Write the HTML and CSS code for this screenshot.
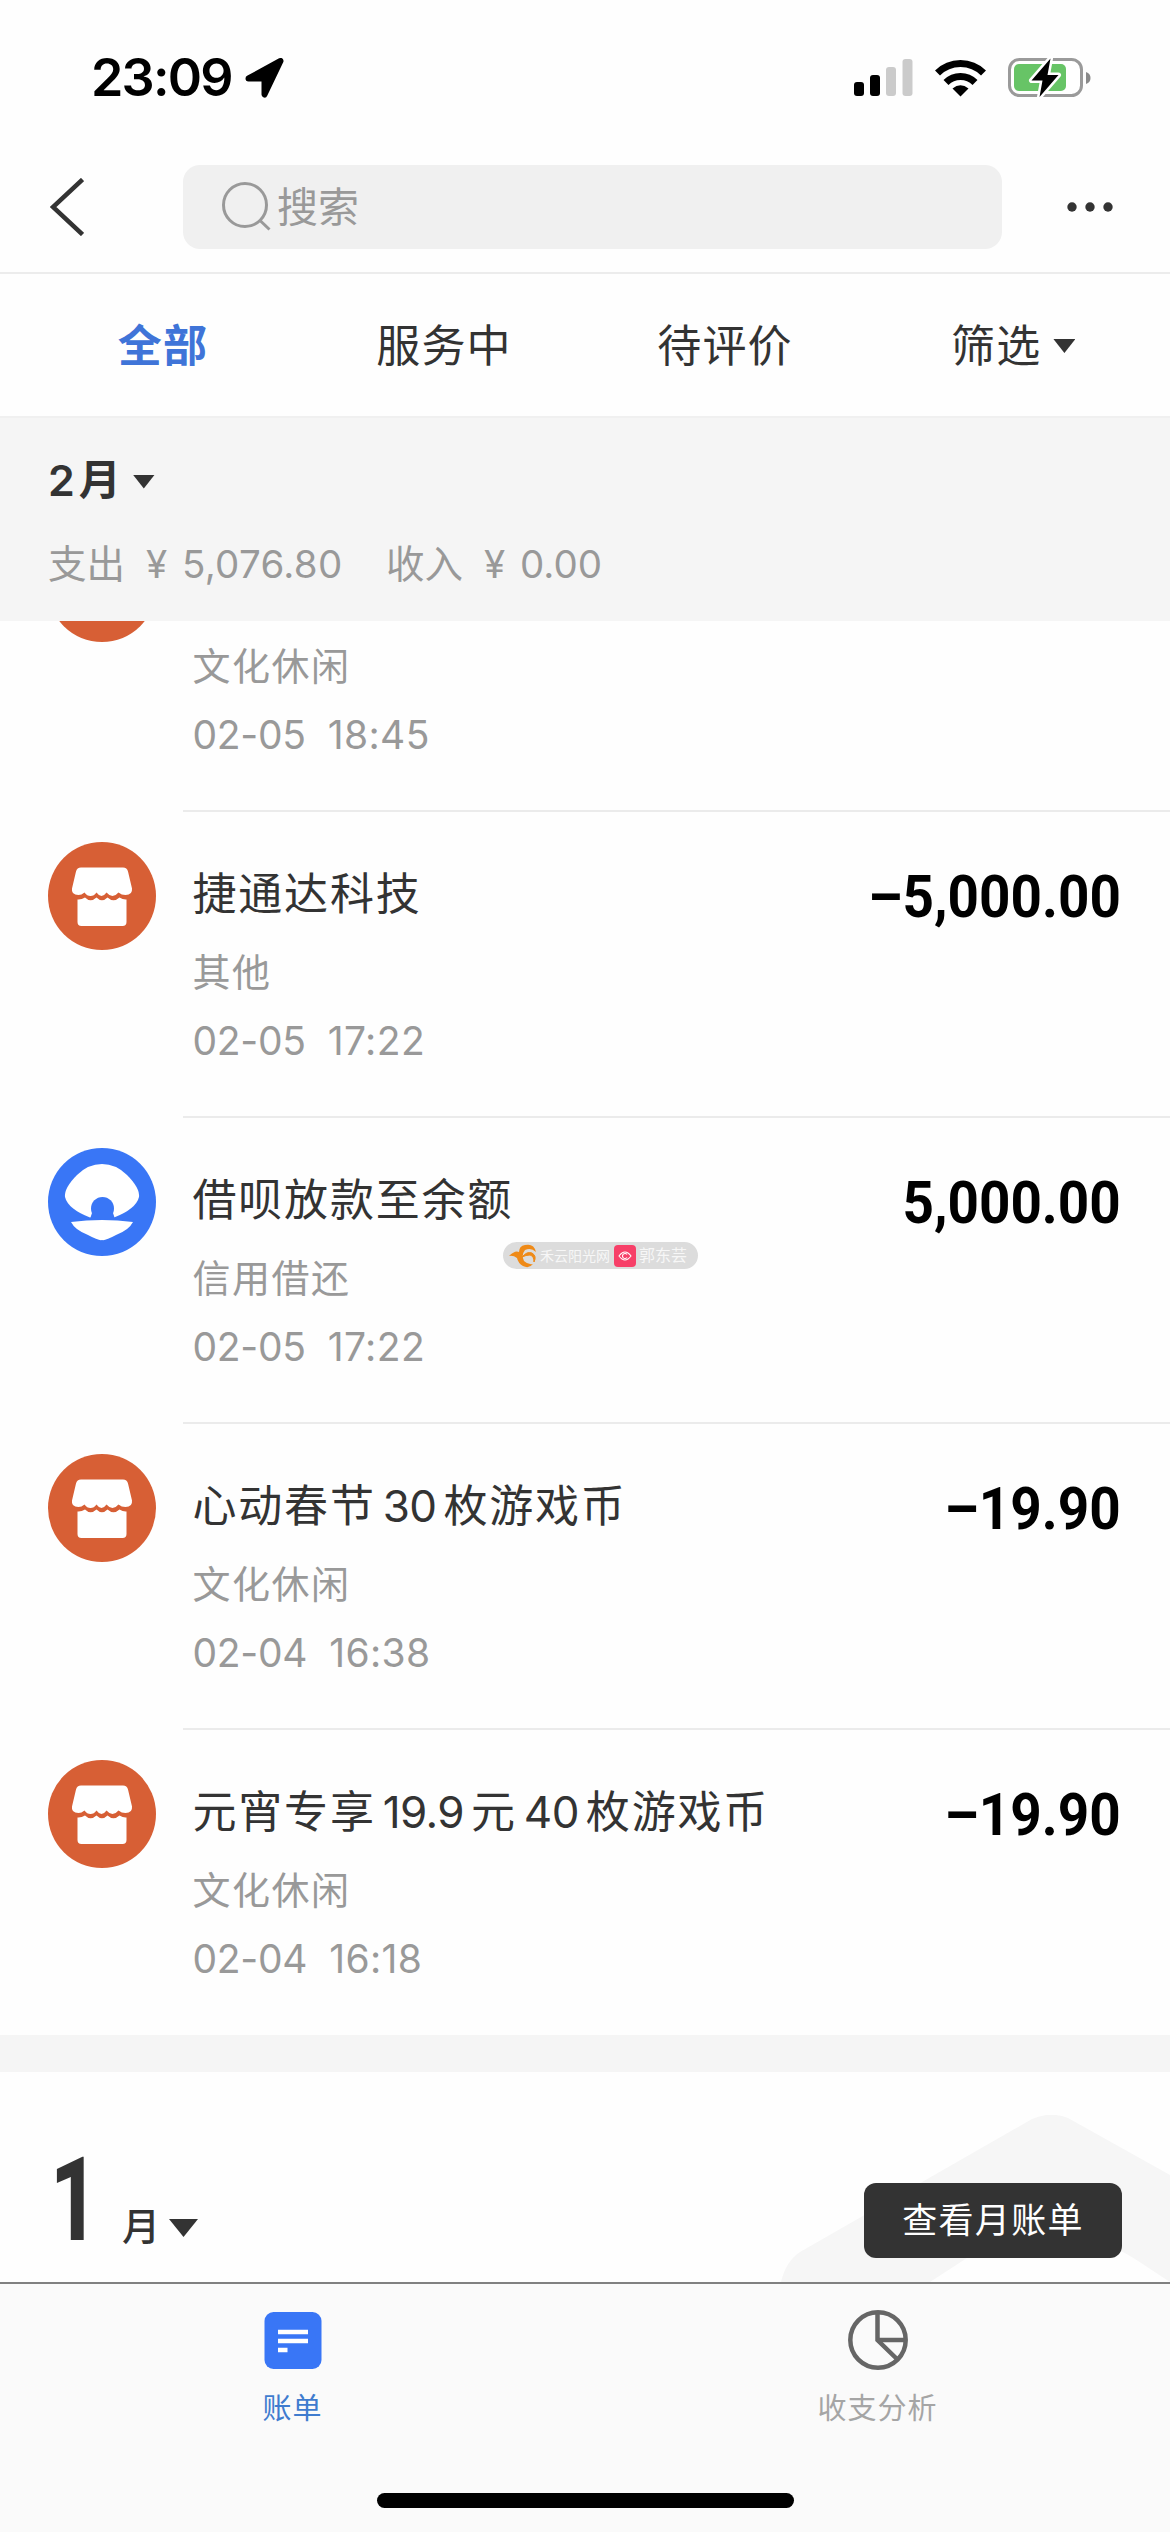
FILE: index.html
```html
<!DOCTYPE html>
<html lang="zh-CN">
<head>
<meta charset="utf-8">
<title>账单</title>
<link rel="stylesheet" href="styles.css">
</head>
<body>
<svg class="defs" width="0" height="0" aria-hidden="true">
  <symbol id="shop" viewBox="0 0 108 108">
    <circle cx="54" cy="54" r="54" fill="#d75f35"/>
    <path fill="#fff" d="M33 25.500h42q4 0 5 4l4 17q.7 6.500-6.500 6.500-4 0-7-2.500-3 3.500-6 3.500t-6-3.500q-2.500 3.500-5 3.500t-5-3.500q-2.500 3.500-6 3.500t-6-3.500q-3 2.500-6 2.500-7.500 0-6.500-6.500l4-17q1-4 5-4z"/>
    <path fill="#fff" d="M29.500 57.500q4 .3 7.500-2 5.500 5.500 11.500 0 5.500 5.500 11 0 6 5.500 12 0 3.500 2.300 7 2v22.500q0 4-4 4h-41q-4 0-4-4z"/>
  </symbol>
</svg>
<header class="top">
  <div class="status">
    <span class="time">23:09</span>
    <svg class="loc" viewBox="0 0 40 40"><path d="M36 3L20 36.500V20.500H4Z" transform="translate(-.5)" fill="#000" stroke="#000" stroke-width="6" stroke-linejoin="round"/></svg>
    <svg class="signal" viewBox="0 0 59 38"><rect y="23" width="10" height="14" rx="3"/><rect x="16" y="16" width="10" height="21" rx="3"/><g fill="#cbcbcb"><rect x="32" y="8" width="10" height="29" rx="3"/><rect x="48.500" width="10" height="37" rx="3"/></g></svg>
    <svg class="wifi" viewBox="0 0 51 38"><g fill="none" stroke="#000" stroke-width="7"><path d="M2.500 14A32.500 32.500 0 0 1 48.500 14"/><path d="M11 23.500A20.500 20.500 0 0 1 40 23.500"/></g><path d="M17.500 29.500Q25.500 23 33.500 29.500L25.500 37.500Z"/></svg>
    <svg class="battery" viewBox="0 0 83 44"><rect x="1.500" y="3.500" width="72" height="36" rx="10" fill="#fff" stroke="#9a9a9a" stroke-width="3"/><rect x="6" y="8" width="52" height="27" rx="5" fill="#67c466"/><path d="M78 16q4.500 1.500 4.500 6t-4.500 6z" fill="#8a8a8a"/><path d="M42.500 2.500L23.500 24.500H34.500L31.500 41L50.500 19H39.500Z" fill="#000" stroke="#fff" stroke-width="5" stroke-linejoin="round" paint-order="stroke"/></svg>
  </div>
  <div class="nav">
    <svg class="back" viewBox="0 0 34 58"><path d="M32.500 1.500L3 29 32.500 56.500" fill="none" stroke="#333" stroke-width="4.500"/></svg>
    <div class="search">
      <svg class="glass" viewBox="0 0 50 50"><g fill="none" stroke="#999" stroke-width="3"><circle cx="24" cy="23" r="21.500"/><path d="M38.500 38L48.500 47.500"/></g></svg>
      <span>搜索</span>
    </div>
    <svg class="more" viewBox="0 0 46 10"><circle cx="5" cy="5" r="4.700"/><circle cx="23" cy="5" r="4.700"/><circle cx="41" cy="5" r="4.700"/></svg>
  </div>
  <nav class="tabs">
    <span class="tab active">全部</span>
    <span class="tab">服务中</span>
    <span class="tab">待评价</span>
    <span class="tab filter">筛选<i class="tri"></i></span>
  </nav>
</header>
<section class="month">
  <div class="month-name">2<span>月</span><i class="tri"></i></div>
  <div class="sum"><span>支出</span><span class="yen">¥</span><span class="out">5,076.80</span><span>收入</span><span class="yen">¥</span><span class="in">0.00</span></div>
</section>
<main class="list">
  <article class="row cut">
    <svg class="avatar"><use href="#shop"/></svg>
    <div class="info"><p class="cat">文化休闲</p><p class="date">02-05<span>18:45</span></p></div>
  </article>
  <article class="row">
    <svg class="avatar"><use href="#shop"/></svg>
    <div class="info"><h2>捷通达科技</h2><p class="cat">其他</p><p class="date">02-05<span>17:22</span></p></div>
    <b class="amount">–5,000.00</b>
  </article>
  <article class="row">
    <svg class="avatar" viewBox="0 0 108 108"><circle cx="54" cy="54" r="54" fill="#3976f6"/><path fill="#fff" d="M54 16Q68 16 79 27 92 40 91 49 88 61 66 69.500H42Q20 61 17 49 16 40 29 27 40 16 54 16Z"/><circle cx="54.500" cy="60.500" r="11.500" fill="#3976f6"/><path fill="#3976f6" d="M44 65h21l2 6H42z"/><path fill="#fff" d="M23 74Q54 70 85 74 81 82 68 87 57 93 54 92 51 93 40 87 27 82 23 74Z"/></svg>
    <div class="info"><h2>借呗放款至余额</h2><p class="cat">信用借还</p><p class="date">02-05<span>17:22</span></p></div>
    <b class="amount">5,000.00</b>
    <div class="mark">
      <svg viewBox="0 0 30 24"><path d="M1 12Q7 6 11 8 11 2 17 1 26-1 28 8 23 3 17 6 13 11 16 17 20 21 25 20 21 25 15 22 10 19 9 14 5 11 1 12Z" fill="#ef8a17"/><path d="M14 13Q19 7 24 9 29 12 26 18 26 12 22 11 18 11 14 13Z" fill="#ef8a17" stroke="#ef8a17"/></svg>
      <span class="mark-a">禾云阳光网</span>
      <svg class="pink" viewBox="0 0 22 22"><rect width="22" height="22" rx="4" fill="#f73f68"/><g fill="none" stroke="#fff" stroke-width="1.100"><path d="M5 11Q11 3 17 11 11 19 5 11Z"/><path d="M13 9.500A2.500 2.500 0 1 0 13 12.500"/></g></svg>
      <span class="mark-b">郭东芸</span>
    </div>
  </article>
  <article class="row">
    <svg class="avatar"><use href="#shop"/></svg>
    <div class="info"><h2>心动春节<span class="num">30</span>枚游戏币</h2><p class="cat">文化休闲</p><p class="date">02-04<span>16:38</span></p></div>
    <b class="amount">–19.90</b>
  </article>
  <article class="row">
    <svg class="avatar"><use href="#shop"/></svg>
    <div class="info"><h2>元宵专享<span class="num">19.9</span>元<span class="num">40</span>枚游戏币</h2><p class="cat">文化休闲</p><p class="date">02-04<span>16:18</span></p></div>
    <b class="amount">–19.90</b>
  </article>
</main>
<section class="next">
  <svg class="hill" viewBox="0 0 390 167"><path fill="#f6f6f6" d="M1 167Q6 146 20 137L252 4Q270-4 288 3L390 60V167L355 144Q272 92 190 141L150 167Z"/></svg>
  <span class="one">1</span><span class="yue">月</span><i class="tri"></i>
  <span class="btn">查看月账单</span>
</section>
<footer class="bar">
  <div class="items">
    <div class="item on">
      <svg viewBox="0 0 60 60"><rect x="1.500" y="2" width="57" height="57" rx="9" fill="#3976f6"/><path d="M15 22h30M15 31h30M15 40h9.500" stroke="#fff" stroke-width="4.500"/></svg>
      <span>账单</span>
    </div>
    <div class="item">
      <svg viewBox="0 0 60 60"><g fill="none" stroke="#666" stroke-width="4.500"><circle cx="30" cy="30" r="27.700"/><path d="M29.500 2V30L50 50"/><path d="M29.500 30H57"/></g></svg>
      <span>收支分析</span>
    </div>
  </div>
  <div class="home"></div>
</footer>
</body>
</html>
```
FILE: styles.css
```css
* { box-sizing: border-box; margin: 0; padding: 0; }
body {
  width: 1170px;
  height: 2532px;
  overflow: hidden;
  display: flex;
  flex-direction: column;
  background: #fefefe;
  color: #333;
  font-family: Inter, "Noto Sans CJK SC", sans-serif;
  white-space: nowrap;
}
svg { display: block; flex: none; }
.defs { position: absolute; }
.tri {
  display: block;
  flex: none;
  width: 22px;
  height: 14px;
  background: #333;
  clip-path: polygon(0 0, 100% 0, 50% 100%);
}

.top { height: 416px; }
.status { height: 156px; padding: 0 79px 0 91px; display: flex; align-items: center; }
.time { font-size: 52px; font-weight: 600; line-height: 60px; letter-spacing: -1.8px; color: #000; width: 156px; }
.loc { width: 40px; height: 40px; }
.signal { width: 59px; height: 38px; margin-left: 569px; }
.wifi { width: 51px; height: 38px; margin-left: 22px; }
.battery { width: 83px; height: 44px; margin-left: 22px; }

.nav { height: 118px; padding: 10px 57px 24px 50px; display: flex; align-items: center; border-bottom: 2px solid #ececec; }
.back { width: 34px; height: 58px; }
.search {
  width: 819px;
  height: 84px;
  margin-left: 99px;
  padding-left: 38px;
  display: flex;
  align-items: center;
  gap: 6px;
  border-radius: 17px;
  background: #f0f0f0;
  color: #999;
  font-size: 41px;
  line-height: 84px;
}
.glass { width: 50px; height: 50px; }
.more { width: 46px; height: 10px; margin-left: auto; fill: #333; }

.tabs { height: 142px; display: grid; grid-template-columns: 326px 236px 326px 1fr; line-height: 144px; font-size: 44px; letter-spacing: 1.2px; text-align: center; }
.active { color: #3f74d8; font-weight: 700; }
.filter { display: flex; align-items: center; padding-left: 63px; }
.filter .tri { margin-left: 12px; }

.month { height: 205px; padding: 37px 48px 0; background: #f5f5f5; border-top: 2px solid #f0f0f0; }
.month-name { height: 50px; display: flex; align-items: center; font-size: 43px; font-weight: 600; line-height: 50px; }
.month-name span { margin-left: 4px; font-size: 42px; }
.month-name .tri { margin-left: 12px; margin-top: 3px; }
.sum { display: flex; align-items: center; height: 50px; margin-top: 34px; color: #999; font-size: 38.500px; line-height: 50px; }
.yen { margin-left: 21px; width: 36px; }
.out { width: 204px; letter-spacing: .3px; }

.list { height: 1414px; overflow: hidden; }
.row { position: relative; height: 306px; padding: 31px 49px 0 48px; display: flex; align-items: flex-start; }
.row::after { content: ""; position: absolute; left: 183px; right: 0; bottom: -1px; height: 2px; background: #ebebeb; }
.row:last-child::after { display: none; }
.cut { height: 190px; padding-top: 0; }
.cut .avatar { margin-top: -87px; }
.avatar { width: 108px; height: 108px; }
.info { margin-left: 36.500px; flex: 1; }
.info h2 { font-size: 44px; font-weight: 400; line-height: 60px; letter-spacing: 1.8px; margin-top: 22px; }
.num { margin: 0 7px 0 7px; letter-spacing: -.6px; }
.cat { height: 50px; line-height: 50px; font-size: 38px; letter-spacing: 1.500px; color: #999; margin-top: 23px; }
.cut .cat { margin-top: 20px; }
.date { height: 50px; line-height: 50px; font-size: 39px; letter-spacing: -.3px; color: #999; margin-top: 19px; }
.date span { margin-left: 22px; letter-spacing: .4px; }
.amount { font: 700 59px/60px Roboto, sans-serif; color: #000; margin-top: 25px; transform: scaleX(.93); transform-origin: right; }

.mark { position: absolute; left: 503px; top: 125px; width: 195px; height: 27px; padding: 0 5px; display: flex; align-items: center; border-radius: 14px; background: #dcdcdc; color: #f7f7f7; line-height: 27px; }
.mark svg { width: 30px; height: 24px; }
.mark-a { font-size: 14px; width: 76px; padding-left: 2px; }
.mark .pink { width: 22px; height: 22px; }
.mark-b { font-size: 16px; margin-left: 3px; }

.next { position: relative; height: 247px; border-top: 37px solid #f5f5f5; padding-left: 50px; display: flex; align-items: flex-end; }
.hill { position: absolute; right: 0; bottom: 0; width: 390px; height: 167px; }
.one { font: 800 117px/83px Roboto, sans-serif; width: 72px; margin-bottom: 40px; transform: scaleX(.72); transform-origin: left; }
.yue { font-size: 38px; font-weight: 500; line-height: 38px; margin-bottom: 37px; }
.next .tri { width: 29px; height: 18px; margin: 0 0 45px 9px; }
.btn { position: relative; margin-left: auto; margin-right: 48px; margin-bottom: 24px; width: 258px; height: 75px; line-height: 75px; border-radius: 12px; background: #333; color: #fff; font-size: 35px; letter-spacing: 1.300px; text-align: center; }

.bar { flex: 1; background: #fafafa; border-top: 2px solid #808080; padding-top: 26px; }
.items { display: grid; grid-template-columns: 1fr 1fr; height: 183px; }
.item { display: flex; flex-direction: column; align-items: center; color: #a5a5a5; font-size: 29px; line-height: 40px; letter-spacing: 1px; }
.item svg { width: 60px; height: 60px; margin-bottom: 19px; }
.on { color: #3f7ccf; }
.home { width: 417px; height: 15px; margin: 0 auto; border-radius: 8px; background: #000; }
```
